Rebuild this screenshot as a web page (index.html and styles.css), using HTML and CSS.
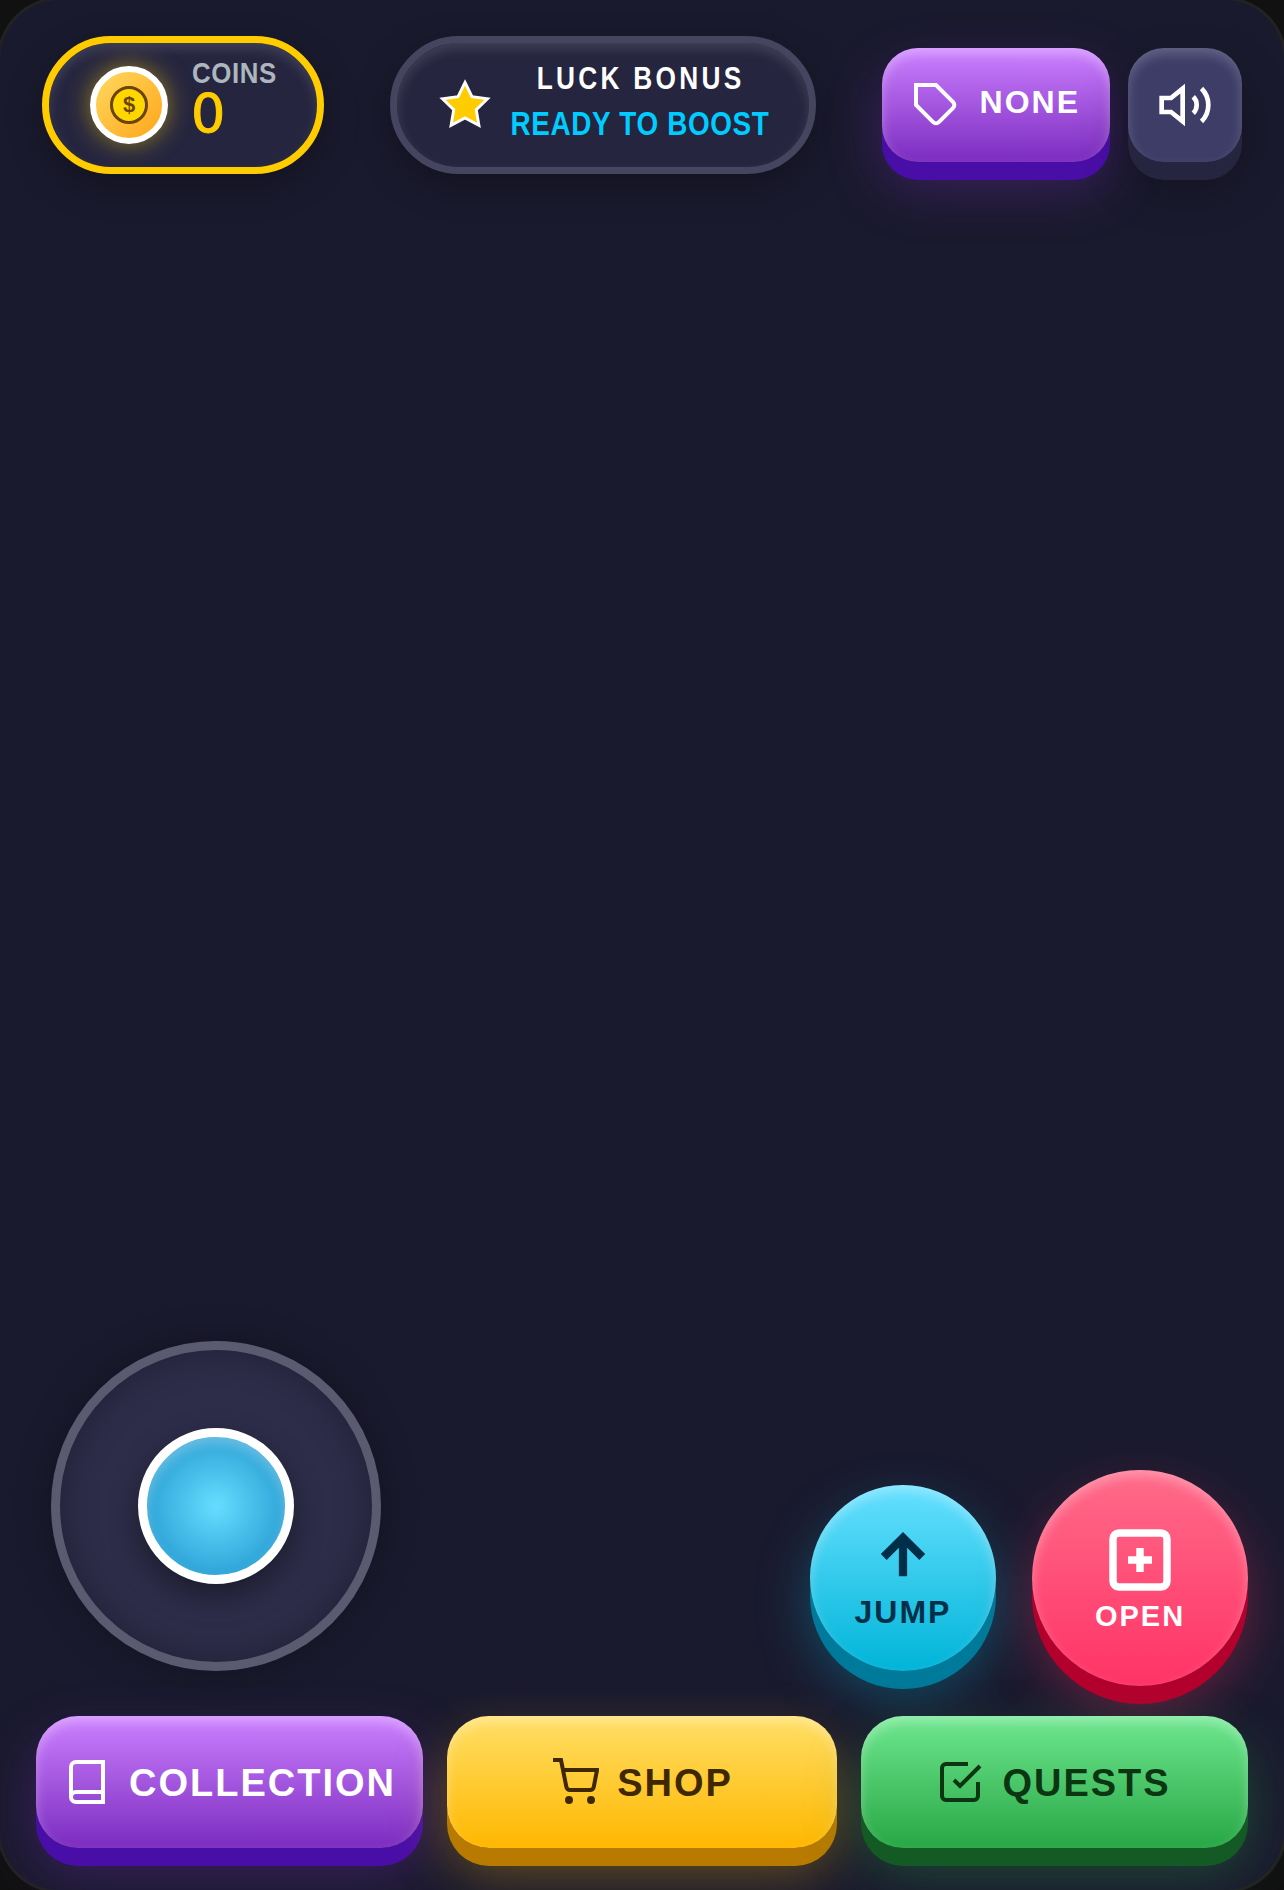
FILE: index.html
```html
<!DOCTYPE html>
<html lang="en">
<head>
  <meta charset="UTF-8">
  <title>Game HUD</title>
  <link rel="stylesheet" href="styles.css">
</head>
<body>
  <div class="stage">
    <header class="top-bar">
      <div class="coins-panel">
        <div class="coin"><span class="coin-inner">$</span></div>
        <div class="coins-text">
          <span class="coins-label">COINS</span>
          <span class="coins-value">0</span>
        </div>
      </div>
      <div class="luck-panel">
        <svg class="star" viewBox="0 0 24 24"><polygon points="12 2 15.09 8.26 22 9.27 17 14.14 18.18 21.02 12 17.77 5.82 21.02 7 14.14 2 9.27 8.91 8.26"/></svg>
        <div class="luck-text">
          <span class="luck-title">LUCK BONUS</span>
          <span class="luck-sub">READY TO BOOST</span>
        </div>
      </div>
      <div class="top-buttons">
        <button class="btn btn-purple tag-btn">
          <svg class="icon" viewBox="0 0 24 24"><path d="M20.59 13.41l-7.17 7.17a2 2 0 0 1-2.83 0L2 12V2h10l8.59 8.59a2 2 0 0 1 0 2.82z"/></svg>
          <span>NONE</span>
        </button>
        <button class="btn btn-slate sound-btn">
          <svg class="icon icon-sound" viewBox="0 0 24 24"><polygon points="11 5 6 9 2 9 2 15 6 15 11 19"/><path d="M15.54 8.46a5 5 0 0 1 0 7.07"/><path d="M19.07 4.93a10 10 0 0 1 0 14.14"/></svg>
        </button>
      </div>
    </header>

    <section class="controls">
      <div class="joystick"><div class="knob"></div></div>
      <div class="actions">
        <button class="round jump">
          <svg class="icon-jump" viewBox="0 0 24 24"><line x1="12" y1="19" x2="12" y2="5"/><polyline points="5 12 12 5 19 12"/></svg>
          <span>JUMP</span>
        </button>
        <button class="round open">
          <svg class="icon-open" viewBox="0 0 24 24"><rect x="3" y="3" width="18" height="18" rx="2"/><line x1="12" y1="8" x2="12" y2="16"/><line x1="8" y1="12" x2="16" y2="12"/></svg>
          <span>OPEN</span>
        </button>
      </div>
    </section>

    <nav class="bottom-bar">
      <button class="btn btn-purple nav-btn">
        <svg class="icon" viewBox="0 0 24 24"><path d="M4 19.5A2.5 2.5 0 0 1 6.5 17H20"/><path d="M6.5 2H20v20H6.5A2.5 2.5 0 0 1 4 19.5v-15A2.5 2.5 0 0 1 6.5 2z"/></svg>
        <span>COLLECTION</span>
      </button>
      <button class="btn btn-yellow nav-btn">
        <svg class="icon" viewBox="0 0 24 24"><circle cx="9" cy="21" r="1"/><circle cx="20" cy="21" r="1"/><path d="M1 1h4l2.68 13.39a2 2 0 0 0 2 1.61h9.72a2 2 0 0 0 2-1.61L23 6H6"/></svg>
        <span>SHOP</span>
      </button>
      <button class="btn btn-green nav-btn">
        <svg class="icon" viewBox="0 0 24 24"><path d="M9 11l3 3L22 4"/><path d="M21 12v7a2 2 0 0 1-2 2H5a2 2 0 0 1-2-2V5a2 2 0 0 1 2-2h11"/></svg>
        <span>QUESTS</span>
      </button>
    </nav>
  </div>
</body>
</html>
```

FILE: styles.css
```css
* {
  box-sizing: border-box;
}
html, body {
  margin: 0;
  height: 100%;
  background: #111111;
  overflow: hidden;
}
button {
  border: 0;
  padding: 0;
  font: inherit;
  color: inherit;
}
svg {
  fill: none;
  stroke: currentColor;
  stroke-width: 2;
  flex-shrink: 0;
}
.stage {
  display: flex;
  flex-direction: column;
  height: 100vh;
  border-radius: 60px;
  background: #1a1a2e;
  box-shadow: 0 0 0 3px #222222;
  font-family: "Liberation Sans", Arial, sans-serif;
  font-weight: 700;
  color: #ffffff;
}

/* top row */
.top-bar {
  display: flex;
  justify-content: space-between;
  align-items: center;
  padding: 36px 42px 0;
}
.coins-panel, .luck-panel {
  display: flex;
  align-items: center;
  height: 138px;
  padding: 0 41px;
  border-radius: 69px;
  background: #25253f;
  box-shadow: 0 12px 36px rgba(0, 0, 0, 0.3), inset 0 6px 12px rgba(255, 255, 255, 0.12);
}
.coins-panel {
  gap: 24px;
  border: 7px solid #ffcc00;
}
.coin {
  display: flex;
  align-items: center;
  justify-content: center;
  width: 78px;
  height: 78px;
  border: 6px solid #ffffff;
  border-radius: 50%;
  background: linear-gradient(135deg, #ffd95e, #ffa51a);
  box-shadow: 0 0 24px rgba(255, 215, 0, 0.5);
}
.coin-inner {
  display: flex;
  align-items: center;
  justify-content: center;
  width: 38px;
  height: 38px;
  border: 3px solid #6b4400;
  border-radius: 50%;
  background: #ffd700;
  color: #6b4400;
  font-size: 22px;
}
.coins-text, .luck-text {
  display: flex;
  flex-direction: column;
}
.coins-text {
  width: 84px;
  padding-bottom: 14px;
}
/* these labels are squeezed narrower than the font's normal width */
.coins-label {
  width: 110px;
  margin-top: -2px;
  font-size: 30px;
  line-height: 32px;
  letter-spacing: 0.7px;
  color: #adb5bd;
  transform: scaleX(0.86);
  transform-origin: left center;
}
.coins-value {
  margin-left: -1px;
  margin-top: 2px;
  font-family: "DejaVu Sans", sans-serif;
  font-size: 54px;
  font-weight: 400;
  line-height: 46px;
  color: #ffcc00;
  -webkit-text-stroke: 1px #ffcc00;
}
.luck-panel {
  gap: 21px;
  border: 7px solid #45455f;
}
.star {
  width: 54px;
  height: 54px;
  fill: #ffcc00;
  stroke: #ffffff;
  stroke-width: 1.3;
}
.luck-text {
  align-items: center;
  width: 255px;
  padding-bottom: 8px;
  font-size: 32px;
  line-height: 45px;
}
.luck-title, .luck-sub {
  white-space: nowrap;
  transform: scaleX(0.82);
}
.luck-title {
  letter-spacing: 4px;
}
.luck-sub {
  font-size: 34px;
  letter-spacing: 0.8px;
  color: #00ccff;
}
.top-buttons {
  display: flex;
  gap: 18px;
}

/* raised buttons */
.btn {
  display: flex;
  align-items: center;
  justify-content: center;
  color: #ffffff;
  letter-spacing: 2px;
}
.btn .icon {
  width: 48px;
  height: 48px;
}
.tag-btn {
  gap: 20px;
  height: 114px;
  padding: 0 30px;
  border-radius: 36px;
  font-size: 32px;
}
.tag-btn span {
  margin-bottom: 5px;
}
.sound-btn {
  width: 114px;
  height: 114px;
  border-radius: 36px;
}
.btn .icon-sound {
  width: 56px;
  height: 56px;
}
.btn-purple {
  background: linear-gradient(180deg, #cc80ff, #7b2cbf);
  box-shadow: 0 18px 0 #4a0ea8, 0 24px 54px rgba(123, 44, 191, 0.35), inset 0 6px 12px rgba(255, 255, 255, 0.3);
}
.btn-slate {
  background: #3d3d68;
  box-shadow: 0 18px 0 #25253f, 0 24px 48px rgba(0, 0, 0, 0.3), inset 0 6px 12px rgba(255, 255, 255, 0.2);
}
.btn-yellow {
  background: linear-gradient(180deg, #ffdf66, #ffb700);
  box-shadow: 0 18px 0 #b87a00, 0 24px 54px rgba(255, 183, 0, 0.35), inset 0 6px 12px rgba(255, 255, 255, 0.3);
  color: #3f2800;
}
.btn-green {
  padding-right: 2px;
  background: linear-gradient(180deg, #6ee78f, #28a745);
  box-shadow: 0 18px 0 #145a24, 0 24px 54px rgba(40, 167, 69, 0.35), inset 0 6px 12px rgba(255, 255, 255, 0.3);
  color: #0c3512;
}

/* joystick and action buttons */
.controls {
  display: flex;
  justify-content: space-between;
  margin-top: auto;
  padding: 0 36px 0 51px;
}
.joystick {
  display: flex;
  align-items: center;
  justify-content: center;
  width: 330px;
  height: 330px;
  margin-bottom: 15px;
  border: 9px solid #5a5a70;
  border-radius: 50%;
  background: #2d2d4a;
  box-shadow: 0 0 36px rgba(0, 0, 0, 0.3), inset 0 0 36px rgba(0, 0, 0, 0.3);
}
.knob {
  width: 156px;
  height: 156px;
  border: 9px solid #ffffff;
  border-radius: 50%;
  background: radial-gradient(circle, #66ddff, #2ea5d8 70%);
  box-shadow: 0 12px 30px rgba(0, 0, 0, 0.4), inset 0 6px 12px rgba(255, 255, 255, 0.3);
}
.actions {
  display: flex;
  align-self: flex-end;
  align-items: center;
  gap: 36px;
}
.round {
  display: flex;
  flex-direction: column;
  align-items: center;
  justify-content: center;
  border-radius: 50%;
  letter-spacing: 2px;
}
.jump {
  width: 186px;
  height: 186px;
  background: linear-gradient(180deg, #66e0ff, #00b4d8);
  box-shadow: 0 18px 0 #007a9a, 0 24px 54px rgba(0, 180, 216, 0.35), inset 0 6px 12px rgba(255, 255, 255, 0.3);
  color: #003049;
  font-size: 32px;
  line-height: 42px;
}
.jump span {
  margin-top: 1px;
}
.icon-jump {
  width: 66px;
  height: 66px;
  stroke-width: 3;
}
.open {
  width: 216px;
  height: 216px;
  background: linear-gradient(180deg, #ff6b8a, #ff3366);
  box-shadow: 0 18px 0 #b3002d, 0 24px 54px rgba(255, 51, 102, 0.35), inset 0 6px 12px rgba(255, 255, 255, 0.3);
  color: #ffffff;
  font-size: 29px;
  line-height: 36px;
}
.open span {
  position: relative;
  top: 2px;
}
.icon-open {
  width: 72px;
  height: 72px;
  stroke-width: 2.5;
}

/* bottom row */
.bottom-bar {
  display: grid;
  grid-template-columns: 387px 390px 387px;
  gap: 24px;
  margin-top: 30px;
  padding: 0 36px 42px;
}
.nav-btn {
  gap: 18px;
  height: 132px;
  border-radius: 42px;
  font-size: 38px;
}
.nav-btn span {
  margin-top: 3px;
}
```
